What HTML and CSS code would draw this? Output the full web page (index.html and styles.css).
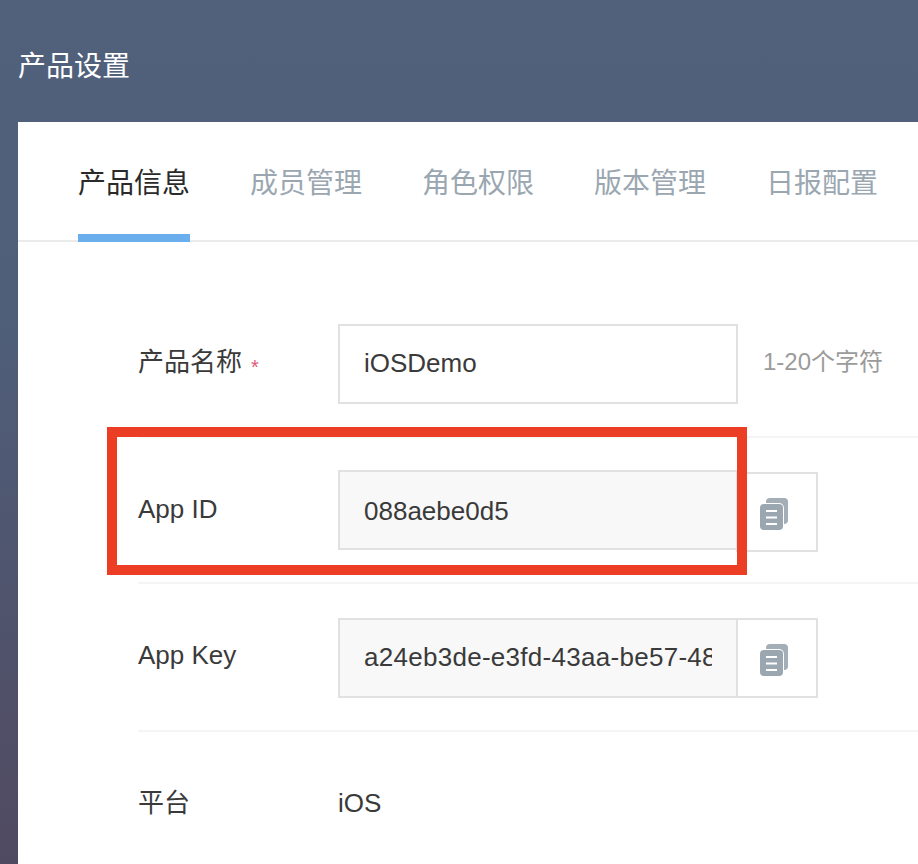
FILE: index.html
```html
<!DOCTYPE html>
<html lang="zh-CN">
<head>
    <meta charset="UTF-8">
    <meta name="viewport" content="width=device-width, initial-scale=1.0">
    <title>产品设置</title>
    <link rel="stylesheet" href="styles.css">
</head>
<body>
    <svg class="icon-defs" width="0" height="0">
        <symbol id="copy" viewBox="0 0 28 32">
            <rect x="6" y="0" width="22" height="26" rx="4" fill="#a3aeb6"/>
            <rect x="-1" y="5" width="25" height="28" rx="5" fill="#fff"/>
            <rect x="0" y="6" width="23" height="26" rx="4" fill="#9aa7b1"/>
            <rect x="6" y="12" width="11" height="2" fill="#fff"/>
            <rect x="6" y="18.500" width="11" height="2" fill="#fff"/>
            <rect x="6" y="25" width="11" height="2" fill="#fff"/>
        </symbol>
    </svg>

    <h1 class="page-title">产品设置</h1>

    <div class="card">
        <div class="tabs">
            <div class="tab active">产品信息</div>
            <div class="tab">成员管理</div>
            <div class="tab">角色权限</div>
            <div class="tab">版本管理</div>
            <div class="tab">日报配置</div>
        </div>

        <div class="form">
            <div class="row row-name">
                <div class="label">产品名称<span class="required">*</span></div>
                <div class="field"><span class="field-text">iOSDemo</span></div>
                <div class="hint">1-20个字符</div>
            </div>

            <div class="row row-id">
                <div class="label">App ID</div>
                <div class="field readonly"><span class="field-text">088aebe0d5</span></div>
                <button class="copy-button copy-button-low"><svg class="copy-icon"><use href="#copy"></use></svg></button>
            </div>

            <div class="row row-key">
                <div class="label">App Key</div>
                <div class="field readonly"><span class="field-text">a24eb3de-e3fd-43aa-be57-48</span></div>
                <button class="copy-button"><svg class="copy-icon"><use href="#copy"></use></svg></button>
            </div>

            <div class="row row-platform">
                <div class="label">平台</div>
                <div class="value">iOS</div>
            </div>
        </div>

        <div class="highlight"></div>
    </div>
</body>
</html>
```

FILE: styles.css
```css
html, body {
    height: 100%;
    margin: 0;
    padding: 0;
    overflow: hidden;
}

body {
    font-family: "Liberation Sans", "Noto Sans CJK SC", sans-serif;
    background: linear-gradient(180deg, #51617c 0%, #4f5f7a 35%, #504a61 100%);
    color: #3a3a3a;
}

.icon-defs {
    position: absolute;
}

.page-title {
    height: 122px;
    margin: 0;
    padding: 0 18px;
    box-sizing: border-box;
    font-size: 28px;
    font-weight: 400;
    line-height: 134px;
    color: #fff;
}

.card {
    position: relative;
    margin-left: 18px;
    height: 742px;
    background: #fff;
}

.tabs {
    display: flex;
    gap: 60px;
    height: 120px;
    box-sizing: border-box;
    padding-left: 60px;
    border-bottom: 2px solid #ebebeb;
}

.tab {
    height: 120px;
    box-sizing: border-box;
    font-size: 28px;
    line-height: 123px;
    white-space: nowrap;
    color: #9aa7b1;
}

.tab.active {
    color: #2a2a2a;
    border-bottom: 8px solid #6aaeee;
}

.form {
    padding: 82px 0 0 120px;
}

.row {
    display: flex;
    align-items: flex-start;
    height: 146px;
    box-sizing: border-box;
    border-bottom: 2px solid #f5f5f5;
}

.row-name {
    height: 114px;
}

.row-id {
    padding-top: 32px;
}

.row-key {
    height: 148px;
    padding-top: 34px;
}

.row-platform {
    align-items: center;
    height: auto;
    padding-top: 55px;
    border-bottom: none;
}

.label {
    width: 200px;
    flex-shrink: 0;
    font-size: 26px;
    line-height: 76px;
}

.row-id .label {
    line-height: 78px;
}

.row-key .label {
    line-height: 74px;
}

.row-platform .label {
    line-height: 32px;
}

.required {
    margin-left: 9px;
    font-size: 20px;
    vertical-align: -3px;
    color: #e0597a;
}

.field {
    width: 400px;
    height: 80px;
    box-sizing: border-box;
    padding: 0 24px;
    border: 2px solid #e1e1e1;
    font-size: 26px;
    line-height: 75px;
}

.field-text {
    display: block;
    overflow: hidden;
    white-space: nowrap;
}

.field.readonly {
    background: #f8f8f8;
    line-height: 78px;
}

.row-key .field {
    line-height: 75px;
    letter-spacing: 0.28px;
}

.hint {
    margin-left: 25px;
    font-size: 24px;
    line-height: 76px;
    color: #9b9b9b;
}

.copy-button {
    display: flex;
    align-items: center;
    justify-content: center;
    width: 82px;
    height: 80px;
    margin-left: -2px;
    padding: 3px 7px 0 0;
    background: #fff;
    border: 2px solid #e1e1e1;
}

.copy-button-low {
    margin-top: 2px;
}

.copy-icon {
    width: 28px;
    height: 32px;
    overflow: visible;
}

.value {
    font-size: 26px;
    line-height: 32px;
}

/* annotation drawn over the App ID row */
.highlight {
    position: absolute;
    left: 89px;
    top: 305px;
    width: 640px;
    height: 148px;
    box-sizing: border-box;
    border: 10px solid #ec3e24;
    pointer-events: none;
}
```
